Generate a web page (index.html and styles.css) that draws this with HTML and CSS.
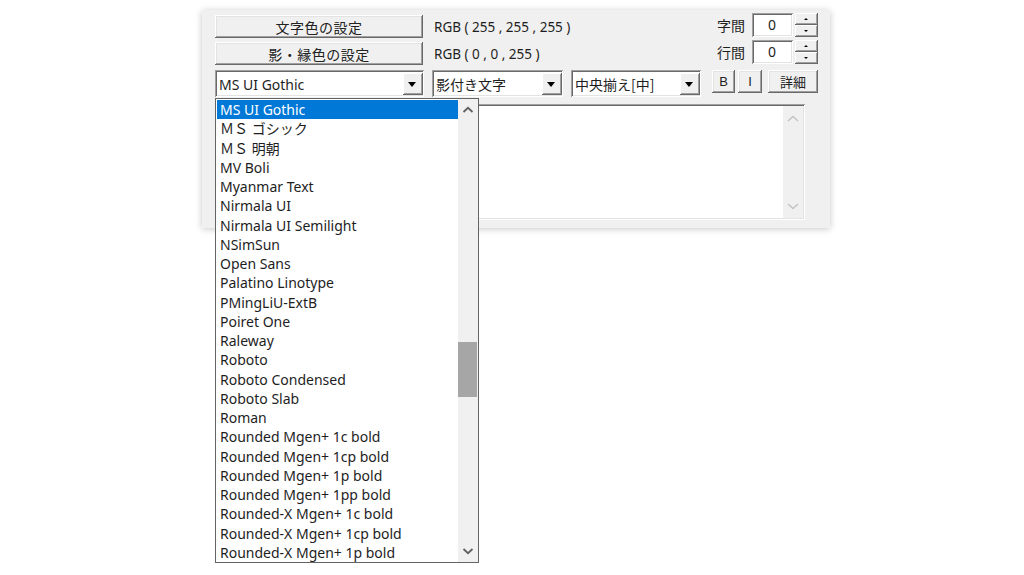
FILE: index.html
```html
<!DOCTYPE html>
<html lang="ja">
<head>
    <meta charset="UTF-8">
    <meta name="viewport" content="width=device-width, initial-scale=1.0">
    <title>テキスト設定</title>
    <link rel="stylesheet" href="styles.css">
</head>
<body>
<div class="screen">
    <div class="panel">
        <!-- 1行目 文字色 -->
        <div class="row">
            <div class="btn color-btn">文字色の設定</div>
            <span class="rgb">RGB ( 255 , 255 , 255 )</span>
            <div class="spin-group">
                <span class="spin-label">字間</span>
                <div class="spin-box">0</div>
                <div class="spin-btns">
                    <div class="spin-up"></div>
                    <div class="spin-down"></div>
                </div>
            </div>
        </div>
        <!-- 2行目 影・縁色 -->
        <div class="row">
            <div class="btn color-btn">影・縁色の設定</div>
            <span class="rgb">RGB ( 0 , 0 , 255 )</span>
            <div class="spin-group">
                <span class="spin-label">行間</span>
                <div class="spin-box">0</div>
                <div class="spin-btns">
                    <div class="spin-up"></div>
                    <div class="spin-down"></div>
                </div>
            </div>
        </div>
        <!-- 3行目 フォント・装飾・揃え -->
        <div class="row row-combo">
            <div class="combo combo-font"><span class="combo-text">MS UI Gothic</span><span class="combo-arrow"></span></div>
            <div class="combo combo-deco"><span class="combo-text jp">影付き文字</span><span class="combo-arrow"></span></div>
            <div class="combo combo-align"><span class="combo-text jp">中央揃え[中]</span><span class="combo-arrow"></span></div>
            <div class="btn small-btn b-btn">B</div>
            <div class="btn small-btn i-btn">I</div>
            <div class="btn small-btn detail-btn">詳細</div>
        </div>
        <!-- テキスト入力 -->
        <div class="textarea">
            <div class="text-body"></div>
            <div class="text-scroll">
                <svg width="12" height="8" viewBox="0 0 12 8"><polyline points="1,6 6,1.5 11,6" fill="none" stroke="#c4c4c4" stroke-width="1.6"/></svg>
                <svg width="12" height="8" viewBox="0 0 12 8"><polyline points="1,2 6,6.5 11,2" fill="none" stroke="#c4c4c4" stroke-width="1.6"/></svg>
            </div>
        </div>

        <!-- フォント一覧 (開いた状態) -->
        <div class="font-list">
            <ul class="items">
                <li class="item item-select">MS UI Gothic</li>
                <li class="item">ＭＳ ゴシック</li>
                <li class="item">ＭＳ 明朝</li>
                <li class="item">MV Boli</li>
                <li class="item">Myanmar Text</li>
                <li class="item">Nirmala UI</li>
                <li class="item">Nirmala UI Semilight</li>
                <li class="item">NSimSun</li>
                <li class="item">Open Sans</li>
                <li class="item">Palatino Linotype</li>
                <li class="item">PMingLiU-ExtB</li>
                <li class="item">Poiret One</li>
                <li class="item">Raleway</li>
                <li class="item">Roboto</li>
                <li class="item">Roboto Condensed</li>
                <li class="item">Roboto Slab</li>
                <li class="item">Roman</li>
                <li class="item">Rounded Mgen+ 1c bold</li>
                <li class="item">Rounded Mgen+ 1cp bold</li>
                <li class="item">Rounded Mgen+ 1p bold</li>
                <li class="item">Rounded Mgen+ 1pp bold</li>
                <li class="item">Rounded-X Mgen+ 1c bold</li>
                <li class="item">Rounded-X Mgen+ 1cp bold</li>
                <li class="item">Rounded-X Mgen+ 1p bold</li>
            </ul>
            <div class="list-scroll">
                <svg class="arrow-up" width="12" height="8" viewBox="0 0 12 8"><polyline points="1.5,6 6,1.8 10.5,6" fill="none" stroke="#606060" stroke-width="1.8"/></svg>
                <div class="thumb-track"><div class="thumb"></div></div>
                <svg class="arrow-down" width="12" height="8" viewBox="0 0 12 8"><polyline points="1.5,2 6,6.2 10.5,2" fill="none" stroke="#606060" stroke-width="1.8"/></svg>
            </div>
        </div>
    </div>
</div>
</body>
</html>
```

FILE: styles.css
```css
html,
body{
    margin: 0;
    height: 100%;
}
body{
    background: #fff;
    font-family: "Noto Sans", "Noto Sans CJK JP", sans-serif;
    color: #1e1e1e;
}
.screen{
    min-height: 575px;
    padding-top: 10px;
    box-sizing: border-box;
}
.panel{
    position: relative;
    box-sizing: border-box;
    width: 628px;
    height: 218px;
    margin-left: 202px;
    padding: 3px 12px 0 13px;
    background: #f0f0f0;
    box-shadow: 0 1px 7px rgba(0,0,0,.22);
}
.row{
    display: flex;
    align-items: center;
    height: 27px;
}
.jp,
.btn{
    font-family: "Noto Sans CJK JP", sans-serif;
}
/* 立体ボタン */
.btn{
    box-sizing: border-box;
    display: flex;
    align-items: center;
    justify-content: center;
    background: #f0f0f0;
    box-shadow: inset -1px -1px #696969, inset 1px 1px #fff, inset -2px -2px #a0a0a0, inset 2px 2px #e3e3e3;
    font-size: 14px;
    color: #222;
}
.color-btn{
    width: 208px;
    height: 23px;
    letter-spacing: 0.5px;
}
.rgb{
    margin-left: 11px;
    font-size: 13.5px;
}
.spin-group{
    display: flex;
    align-items: center;
    margin-left: auto;
    align-self: flex-start;
}
.spin-label{
    font-family: "Noto Sans CJK JP", sans-serif;
    font-size: 14px;
    margin-right: 7px;
}
.spin-box{
    box-sizing: border-box;
    width: 41px;
    height: 24px;
    padding-left: 16px;
    line-height: 24px;
    font-size: 14px;
    background: #fff;
    box-shadow: inset 1px 1px #a0a0a0, inset -1px -1px #fff, inset 2px 2px #696969, inset -2px -2px #e3e3e3;
}
.spin-btns{
    display: flex;
    flex-direction: column;
    width: 23px;
    height: 24px;
    margin-left: 2px;
}
.spin-up,
.spin-down{
    flex: 1;
    position: relative;
    box-shadow: inset -1px -1px #696969, inset 1px 1px #fff, inset -2px -2px #a0a0a0;
}
.spin-up::after,
.spin-down::after{
    content: "";
    position: absolute;
    left: 9px;
    top: 5px;
    border-left: 2px solid transparent;
    border-right: 2px solid transparent;
}
.spin-up::after{ border-bottom: 2px solid #000; }
.spin-down::after{ border-top: 2px solid #000; }

.row-combo{
    margin-top: 3px;
    align-items: flex-start;
}
/* へこんだコンボボックス */
.combo{
    box-sizing: border-box;
    display: flex;
    align-items: center;
    height: 27px;
    padding: 3px 1px 2px 4px;
    background: #fff;
    box-shadow: inset 1px 1px #a0a0a0, inset -1px -1px #fff, inset 2px 2px #696969, inset -2px -2px #e3e3e3;
    font-size: 14px;
}
.combo-font{ width: 209px; }
.combo-deco{ width: 131px; margin-left: 8px; }
.combo-align{ width: 130px; margin-left: 8px; }
.combo-text{
    flex: 1;
    white-space: nowrap;
}
.combo-arrow{
    position: relative;
    width: 20px;
    height: 22px;
    background: #f0f0f0;
    box-shadow: inset -1px -1px #696969, inset 1px 1px #fff, inset -2px -2px #a0a0a0;
}
.combo-arrow::after{
    content: "";
    position: absolute;
    left: 5px;
    top: 9px;
    border-left: 4px solid transparent;
    border-right: 4px solid transparent;
    border-top: 5px solid #000;
}
.small-btn{
    height: 23px;
    font-family: "Liberation Sans", sans-serif;
    font-size: 13px;
}
.b-btn{ width: 23px; margin-left: 11px; }
.i-btn{ width: 24px; margin-left: 3px; }
.detail-btn{
    width: 50px;
    margin-left: 6px;
    font-family: "Noto Sans CJK JP", sans-serif;
    font-size: 13px;
}

.textarea{
    box-sizing: border-box;
    display: flex;
    width: 590px;
    height: 116px;
    margin-top: 7px;
    padding: 2px;
    background: #fff;
    box-shadow: inset 1px 1px #a0a0a0, inset -1px -1px #fff, inset 2px 2px #696969, inset -2px -2px #e3e3e3;
}
.text-body{
    flex: 1;
}
.text-scroll{
    display: flex;
    flex-direction: column;
    justify-content: space-between;
    align-items: center;
    width: 20px;
    padding: 9px 0 8px;
    background: #f0f0f0;
}

/* 開いたフォント一覧 */
.font-list{
    position: absolute;
    left: 13px;
    top: 88px;
    z-index: 2;
    box-sizing: border-box;
    display: flex;
    width: 264px;
    height: 465px;
    padding: 1px 0 1px 1px;
    border: 1px solid #646464;
    background: #fff;
}
.items{
    flex: 1;
    margin: 0;
    padding: 0;
    list-style-type: none;
}
.item{
    height: 19.25px;
    line-height: 19px;
    padding-left: 3px;
    font-size: 14px;
    white-space: nowrap;
    color: #1e1e1e;
}
.item-select{
    background: #0078d7;
    color: #fff;
}
.list-scroll{
    display: flex;
    flex-direction: column;
    align-items: center;
    width: 20px;
    margin-top: -1px;
    margin-bottom: -1px;
    background: #f0f0f0;
}
.arrow-up{
    margin: 7px 0 6px;
}
.arrow-down{
    margin: 6px 0 7px;
}
.thumb-track{
    flex: 1;
    width: 100%;
    position: relative;
}
.thumb{
    position: absolute;
    left: 0;
    right: 1px;
    top: 222px;
    height: 55px;
    background: #a6a6a6;
}
```
